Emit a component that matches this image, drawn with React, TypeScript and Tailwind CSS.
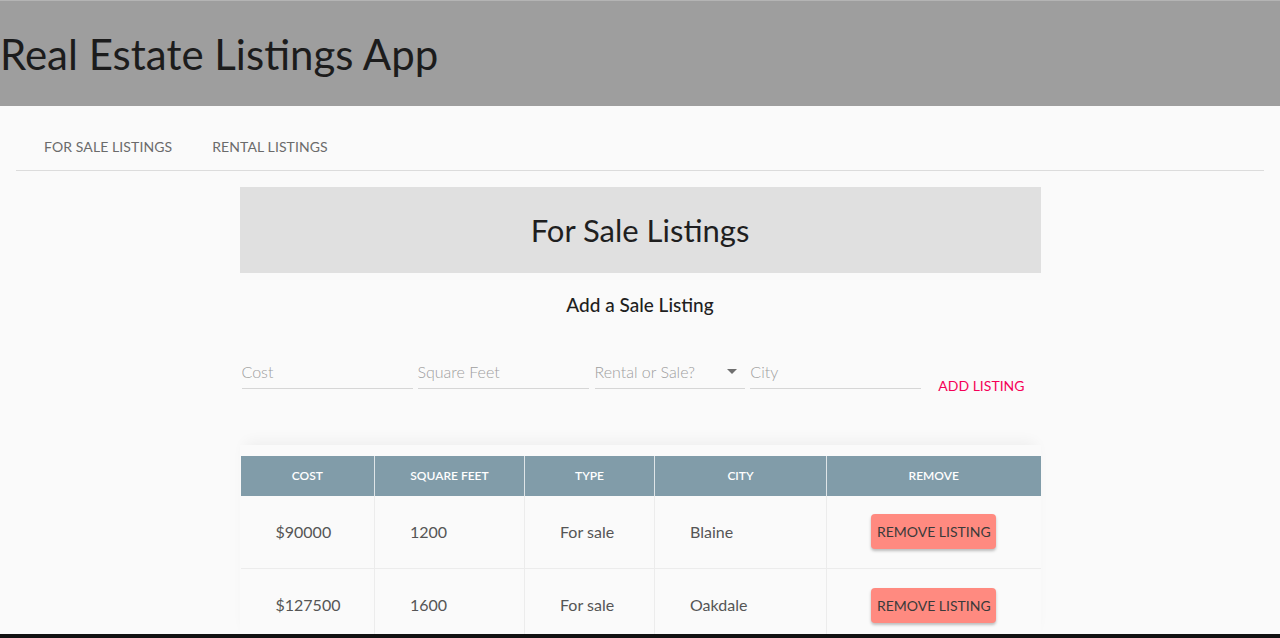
import React from "react";

type Listing = {
  id: number;
  cost: string;
  sqft: string;
  type: string;
  city: string;
};

const listings: Listing[] = [
  { id: 1, cost: "$90000", sqft: "1200", type: "For sale", city: "Blaine" },
  { id: 2, cost: "$127500", sqft: "1600", type: "For sale", city: "Oakdale" },
];

const font = { fontFamily: "Lato, 'Noto Sans', sans-serif" };

function Header() {
  return (
    <header className="flex h-[106px] items-center border-t border-[#b4b4b4] bg-[#9e9e9e]">
      <h1 className="text-[42px] font-normal leading-none text-[#1c1c1c]">Real Estate Listings App</h1>
    </header>
  );
}

function Tabs() {
  return (
    <div className="mx-4 mt-4 flex h-[49px] items-center gap-10 border-b border-[#dcdcdc] pl-[28px]">
      <button className="text-[14px] uppercase tracking-[0.1px] text-[#6b6b6b]">For Sale Listings</button>
      <button className="text-[14px] uppercase tracking-[0.1px] text-[#6b6b6b]">Rental Listings</button>
    </div>
  );
}

const inputCls =
  "h-[30px] w-[171px] border-b border-[#d6d6d6] bg-transparent pb-1 text-[16px] font-light text-[#555] outline-none placeholder:text-[#9e9e9e]";

function AddForm() {
  return (
    <div className="mt-[39px] flex items-end pl-[2px]">
      <input placeholder="Cost" className={inputCls} />
      <input placeholder="Square Feet" className={`ml-[5px] ${inputCls}`} />
      <div className="ml-[6px] flex h-[30px] w-[153px] items-start justify-between border-b border-[#d6d6d6] pt-[1px]">
        <span className="text-[16px] font-light text-[#9e9e9e]">Rental or Sale?</span>
        <svg width="24" height="24" viewBox="0 0 24 24" className="-mt-[1px] mr-[1px] fill-[#6f6f6f]">
          <path d="M7 10l5 5 5-5z" />
        </svg>
      </div>
      <input placeholder="City" className={`ml-[5px] ${inputCls}`} />
      <button className="-mb-[15px] ml-[1px] h-9 whitespace-nowrap px-4 text-[14px] uppercase text-[#f50057]">
        Add Listing
      </button>
    </div>
  );
}

function ListingsTable({ rows }: { rows: Listing[] }) {
  const th = "border-r border-[#dfe5e8] px-2 text-center text-[12px] font-semibold uppercase text-white last:border-r-0";
  const td = "border-b border-r border-[#ececec] pl-[35px] text-left text-[16px] font-normal text-[#555] last:border-r-0";
  return (
    <div className="mt-[56px] pt-[11px] shadow-[0_-8px_14px_-6px_rgba(0,0,0,0.06)]">
      <table className="ml-px w-[800px] table-fixed border-collapse">
        <colgroup>
          <col className="w-[134px]" />
          <col className="w-[150px]" />
          <col className="w-[130px]" />
          <col className="w-[172px]" />
          <col className="w-[214px]" />
        </colgroup>
        <thead className="bg-[#819ca9]">
          <tr className="h-[40px]">
            <th className={th}>Cost</th>
            <th className={th}>Square Feet</th>
            <th className={th}>Type</th>
            <th className={th}>City</th>
            <th className={th}>Remove</th>
          </tr>
        </thead>
        <tbody>
          {rows.map((r) => (
            <tr key={r.id} className="h-[73px]">
              <td className={td}>{r.cost}</td>
              <td className={td}>{r.sqft}</td>
              <td className={td}>{r.type}</td>
              <td className={td}>{r.city}</td>
              <td className="border-b border-[#ececec] text-center">
                <button className="h-[35px] w-[125px] rounded-[4px] bg-[#ff8a80] text-[14px] uppercase text-[#3a3a3a] shadow-[0_2px_3px_rgba(0,0,0,0.25)]">
                  Remove Listing
                </button>
              </td>
            </tr>
          ))}
        </tbody>
      </table>
    </div>
  );
}

export default function App() {
  return (
    <div className="min-h-screen overflow-hidden bg-[#fafafa]" style={font}>
      <Header />
      <Tabs />
      <main className="mx-auto mt-4 w-[801px]">
        <div className="flex h-[86px] items-center justify-center bg-[#e0e0e0]">
          <h2 className="text-[31px] font-normal text-[#1f1f1f]">For Sale Listings</h2>
        </div>
        <h3 className="mt-[18px] text-center text-[19px] font-medium text-[#1f1f1f]">Add a Sale Listing</h3>
        <AddForm />
        <ListingsTable rows={listings} />
      </main>
      <div className="fixed bottom-0 left-0 h-[4px] w-full bg-[#111]" />
    </div>
  );
}
